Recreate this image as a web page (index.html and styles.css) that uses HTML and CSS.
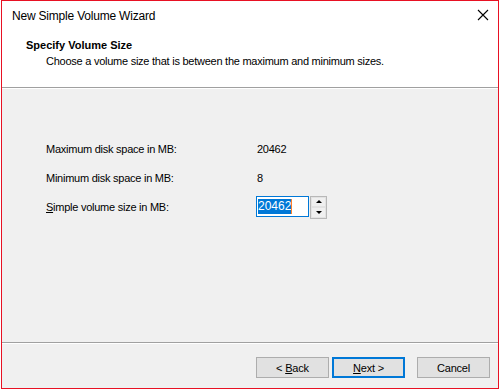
FILE: index.html
```html
<!DOCTYPE html>
<html lang="en">
<head>
<meta charset="UTF-8">
<title>New Simple Volume Wizard</title>
<link rel="stylesheet" href="styles.css">
</head>
<body>

<div class="window">

<!-- Title bar -->
<div class="titlebar">
<span class="title">New Simple Volume Wizard</span>
<span class="close">
<svg width="12" height="12" viewBox="0 0 12 12"><path d="M1 1 L11 11 M11 1 L1 11" stroke="#000" stroke-width="1.1" fill="none"/></svg>
</span>
</div>

<!-- Header -->
<div class="header">
<div class="head-title">Specify Volume Size</div>
<div class="head-sub">Choose a volume size that is between the maximum and minimum sizes.</div>
</div>

<!-- Body -->
<div class="content">
<div class="row">
<span class="label">Maximum disk space in MB:</span>
<span class="value">20462</span>
</div>
<div class="row">
<span class="label">Minimum disk space in MB:</span>
<span class="value">8</span>
</div>
<div class="row">
<span class="label"><u>S</u>imple volume size in MB:</span>
<div class="spin">
<div class="spin-input"><span class="sel">20462</span><span class="caret"></span></div>
<div class="spin-btns">
<div class="spin-btn"><span class="tri-up"></span></div>
<div class="spin-btn"><span class="tri-down"></span></div>
</div>
</div>
</div>
</div>

<!-- Footer buttons -->
<div class="footer">
<button class="btn">&lt; <u>B</u>ack</button>
<button class="btn default"><u>N</u>ext &gt;</button>
<button class="btn cancel">Cancel</button>
</div>

</div>

</body>
</html>
```

FILE: styles.css
```css
body{
    margin:0;
    background:#fff;
    font-family:"Liberation Sans",Arial,sans-serif;
    font-size:11px;
    letter-spacing:-0.25px;
    color:#000;
}

.window{
    margin-left:1px;
    width:496px;
    height:387px;
    border:1px solid #e81123;
    display:flex;
    flex-direction:column;
    background:#f0f0f0;
}

.titlebar{
    background:#fff;
    height:29px;
    display:flex;
    align-items:center;
    justify-content:space-between;
    padding:0 9px 0 10px;
}

.title{
    font-size:12px;
    letter-spacing:-0.2px;
}

.close{
    display:flex;
    margin-top:-2px;
}

.header{
    background:#fff;
    height:57px;
    padding-left:24px;
    border-bottom:1px solid #a0a0a0;
    box-shadow:0 1px 0 #fff;
}

.head-title{
    font-weight:bold;
    letter-spacing:0;
    margin-top:7px;
    line-height:16px;
}

.head-sub{
    padding-left:20px;
    line-height:16px;
}

.content{
    flex:1;
    padding:50px 0 0 44px;
    border-bottom:1px solid #a0a0a0;
    box-shadow:0 1px 0 #fff;
}

.row{
    display:flex;
    align-items:center;
    height:22px;
    margin-bottom:7px;
}

.label{
    width:210px;
}

.value{
    padding-left:1px;
}

.spin{
    display:flex;
    height:23px;
}

.spin-input{
    width:50px;
    height:19px;
    border:1px solid #0078d7;
    background:#fff;
    display:flex;
    align-items:center;
    padding-left:1px;
    margin-right:1px;
}

.sel{
    background:#0078d7;
    color:#fff;
    line-height:15px;
    font-size:12px;
    letter-spacing:0;
}

.caret{
    width:1px;
    height:15px;
    background:#ff8028;
}

.spin-btns{
    display:flex;
    flex-direction:column;
    border:1px solid #b8b8b8;
    width:15px;
}

.spin-btn{
    flex:1;
    display:flex;
    justify-content:center;
    align-items:center;
    background:#f0f0f0;
    border:1px solid #e3e3e3;
}

.tri-up{
    border-left:3px solid transparent;
    border-right:3px solid transparent;
    border-bottom:3px solid #000;
}

.tri-down{
    border-left:3px solid transparent;
    border-right:3px solid transparent;
    border-top:3px solid #000;
}

.footer{
    height:45px;
    display:flex;
    align-items:flex-start;
    padding:14px 0 0 254px;
    box-sizing:border-box;
}

.btn{
    width:73px;
    height:21px;
    border:1px solid #adadad;
    background:#e1e1e1;
    font-family:inherit;
    font-size:11px;
    letter-spacing:-0.2px;
    color:#000;
    padding:0;
    margin-right:3px;
}

.default{
    border:2px solid #0078d7;
}

.cancel{
    margin-left:9px;
}
```
